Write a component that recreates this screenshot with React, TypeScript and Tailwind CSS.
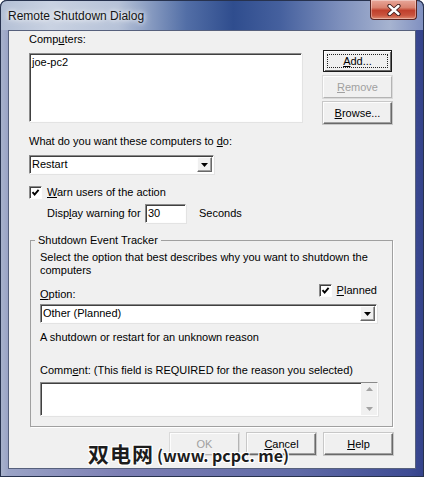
import React from "react";

const ui = "font-['Liberation_Sans',Arial,sans-serif] text-[11px] leading-[13px] text-black";

function U({children}: {children: React.ReactNode}) {
  return <span className="underline underline-offset-[1px]">{children}</span>;
}

function Btn({children, def, disabled}: {children: React.ReactNode; def?: boolean; disabled?: boolean}) {
  if (def) {
    return (
      <div className="flex h-[22px] w-[69px] items-center justify-center border border-[#1a1a1a] bg-[#f0f0f0] shadow-[inset_1px_1px_0_#fff,inset_-1px_-1px_0_#696969]">
        <div className="flex h-[14px] w-[61px] items-center justify-center border border-dotted border-[#222]">{children}</div>
      </div>
    );
  }
  return (
    <div
      className={`flex h-[22px] w-[69px] items-center justify-center border border-t-[#fdfdfd] border-l-[#fdfdfd] bg-[#f0f0f0] ${
        disabled
          ? "border-b-[#b4b4b4] border-r-[#b4b4b4] text-[#a0a0a0] shadow-[0_0_0_1px_#dadada]"
          : "border-b-[#696969] border-r-[#696969] shadow-[inset_-1px_-1px_0_#a0a0a0,0_0_0_1px_#c8c8c8]"
      }`}>
      {children}
    </div>
  );
}

function Arrow() {
  return (
    <div className="mr-[1px] flex h-[15px] w-[15px] items-center justify-center border border-t-[#fdfdfd] border-l-[#fdfdfd] border-b-[#696969] border-r-[#696969] bg-[#f0f0f0] shadow-[inset_-1px_-1px_0_#a0a0a0]">
      <svg width="7" height="4" viewBox="0 0 7 4">
        <path d="M0 0h7L3.5 4z" fill="#000" />
      </svg>
    </div>
  );
}

function Combo({value, w}: {value: string; w: string}) {
  return (
    <div className={`flex h-[19px] ${w} items-center border border-[#8a8a8a] border-b-[#fdfdfd] border-r-[#fdfdfd] bg-white pl-[2px] shadow-[inset_1px_1px_0_#404040,1px_1px_0_#e3e3e3]`}>
      <span className="flex-1">{value}</span>
      <Arrow />
    </div>
  );
}

function Check() {
  return (
    <div className="flex h-[13px] w-[13px] items-center justify-center border border-[#8a8a8a] border-b-[#fdfdfd] border-r-[#fdfdfd] bg-white shadow-[inset_1px_1px_0_#404040]">
      <svg width="9" height="9" viewBox="0 0 9 9">
        <path d="M1.5 4.2 3.6 6.5 7.6 1.8" fill="none" stroke="#000" strokeWidth="1.9" />
      </svg>
    </div>
  );
}

function CloseX() {
  return (
    <svg width="14" height="12" viewBox="0 0 14 12">
      <path d="M2.5 2 11.5 10M11.5 2 2.5 10" stroke="#3a1a1a" strokeWidth="4.2" strokeLinecap="round" />
      <path d="M2.5 2 11.5 10M11.5 2 2.5 10" stroke="#fff" strokeWidth="2.4" strokeLinecap="round" />
    </svg>
  );
}

export default function App() {
  return (
    <div className="relative h-[477px] w-[424px] overflow-hidden bg-white">
      <div className="flex h-full w-full flex-col rounded-t-[7px] bg-[linear-gradient(90deg,#aab4cc_0px,#9aa3c6_8px,#7c7fb4_120px,#5f6aa6_300px,#3e4c94_410px,#34428a_424px)] shadow-[inset_0_0_0_1px_#27324e] px-[8px]">
        <div className="-mx-[8px] flex h-[30px] shrink-0 justify-between rounded-t-[7px] bg-[linear-gradient(90deg,#b3bfd5_0%,#c9d2e2_12%,#b6c2d8_28%,#526ea6_44%,#2f4d8e_55%,#45609e_66%,#7d8fbc_80%,#a6b3d0_92%,#7f8fc0_100%)] pl-[8px] pr-[7px] shadow-[inset_0_1px_0_#27324e,inset_1px_0_0_#27324e,inset_-1px_0_0_#27324e]">
          <span className="font-['Liberation_Sans',Arial,sans-serif] self-center pt-[1px] text-[12px] text-[#141414] [text-shadow:0_0_8px_#fff,0_0_4px_#fff]">
            Remote Shutdown Dialog
          </span>
          <div className="flex h-[20px] w-[47px] items-center justify-center rounded-b-[4px] border border-t-0 border-[#5a2420] bg-[linear-gradient(180deg,#e8a79a_0%,#d9826f_40%,#c0402c_55%,#c9533d_80%,#dd8a70_100%)] shadow-[inset_0_0_0_1px_rgba(255,255,255,0.35)]">
            <CloseX />
          </div>
        </div>

        <div className={`${ui} flex h-[439px] shrink-0 flex-col border border-[#56607c] bg-[#f0f0f0] pl-[20px] pt-[2px]`}>
          <div className="flex">
            <div className="flex w-[273px] flex-col">
              <span>
                Comp<U>u</U>ters:
              </span>
              <div className="mt-[7px] h-[69px] border border-[#8a8a8a] border-b-[#fdfdfd] border-r-[#fdfdfd] bg-white pl-[2px] pt-[2px] shadow-[inset_1px_1px_0_#404040,1px_1px_0_#e3e3e3]">
                joe-pc2
              </div>
            </div>
            <div className="ml-[21px] mt-[17px] flex flex-col gap-[4px]">
              <Btn def>
                <U>A</U>dd...
              </Btn>
              <Btn disabled>
                <U>R</U>emove
              </Btn>
              <Btn>
                <U>B</U>rowse...
              </Btn>
            </div>
          </div>

          <span className="mt-[11px]">
            What do you want these computers to <U>d</U>o:
          </span>
          <div className="mt-[7px]">
            <Combo value="Restart" w="w-[185px]" />
          </div>

          <div className="mt-[12px] flex h-[13px] items-center gap-[5px]">
            <Check />
            <span>
              <U>W</U>arn users of the action
            </span>
          </div>

          <div className="ml-[18px] mt-[5px] flex h-[19px] items-center">
            <span className="w-[98px]">
              Disp<U>l</U>ay warning for
            </span>
            <div className="flex h-[19px] w-[41px] items-center border border-[#8a8a8a] border-b-[#fdfdfd] border-r-[#fdfdfd] bg-white pl-[2px] shadow-[inset_1px_1px_0_#404040,1px_1px_0_#e3e3e3]">
              30
            </div>
            <span className="ml-[13px]">Seconds</span>
          </div>

          <fieldset className="ml-[1px] mt-[11px] h-[193px] w-[363px] border border-[#a0a0a0] pb-[10px] pl-[9px] shadow-[1px_1px_0_#fff]">
            <legend className="-ml-[5px] px-[3px]">Shutdown Event Tracker</legend>
            <p className="mt-[4px] w-[330px]">Select the option that best describes why you want to shutdown the computers</p>
            <div className="mt-[7px] flex h-[17px] w-[337px] justify-between">
              <span className="self-end">
                <U>O</U>ption:
              </span>
              <div className="flex h-[13px] items-center gap-[5px] self-start">
                <Check />
                <span>
                  <U>P</U>lanned
                </span>
              </div>
            </div>
            <div className="mt-[3px]">
              <Combo value="Other (Planned)" w="w-[337px]" />
            </div>
            <p className="mt-[8px]">A shutdown or restart for an unknown reason</p>
            <p className="mt-[20px]">
              Comm<U>e</U>nt: (This field is REQUIRED for the reason you selected)
            </p>
            <div className="mt-[5px] flex h-[34px] w-[338px] border border-[#8a8a8a] border-b-[#fdfdfd] border-r-[#fdfdfd] bg-white shadow-[inset_1px_1px_0_#404040,1px_1px_0_#e3e3e3]">
              <div className="flex-1" />
              <div className="flex w-[16px] flex-col items-center justify-between bg-[#f0f0f0] py-[4px]">
                <svg width="7" height="4" viewBox="0 0 7 4">
                  <path d="M0 4h7L3.5 0z" fill="#a3a3a3" />
                </svg>
                <svg width="7" height="4" viewBox="0 0 7 4">
                  <path d="M0 0h7L3.5 4z" fill="#a3a3a3" />
                </svg>
              </div>
            </div>
          </fieldset>

          <div className="mt-[6px] flex w-[364px] justify-end gap-[8px]">
            <Btn disabled>OK</Btn>
            <Btn>
              <U>C</U>ancel
            </Btn>
            <Btn>
              <U>H</U>elp
            </Btn>
          </div>
        </div>
      </div>

      <div className="absolute left-[88px] top-[440px] flex items-baseline font-['Noto_Sans_CJK_SC',sans-serif] font-bold text-[#1c1c1c] [text-shadow:1px_1px_0_#fff,-1px_-1px_0_#fff,1px_-1px_0_#fff,-1px_1px_0_#fff,0_0_2px_#fff]">
        <span className="text-[21px] leading-[26px] tracking-[1px]">双电网</span>
        <span className="ml-[3px] text-[16px] leading-[26px]">(www. pcpc. me)</span>
      </div>
    </div>
  );
}
